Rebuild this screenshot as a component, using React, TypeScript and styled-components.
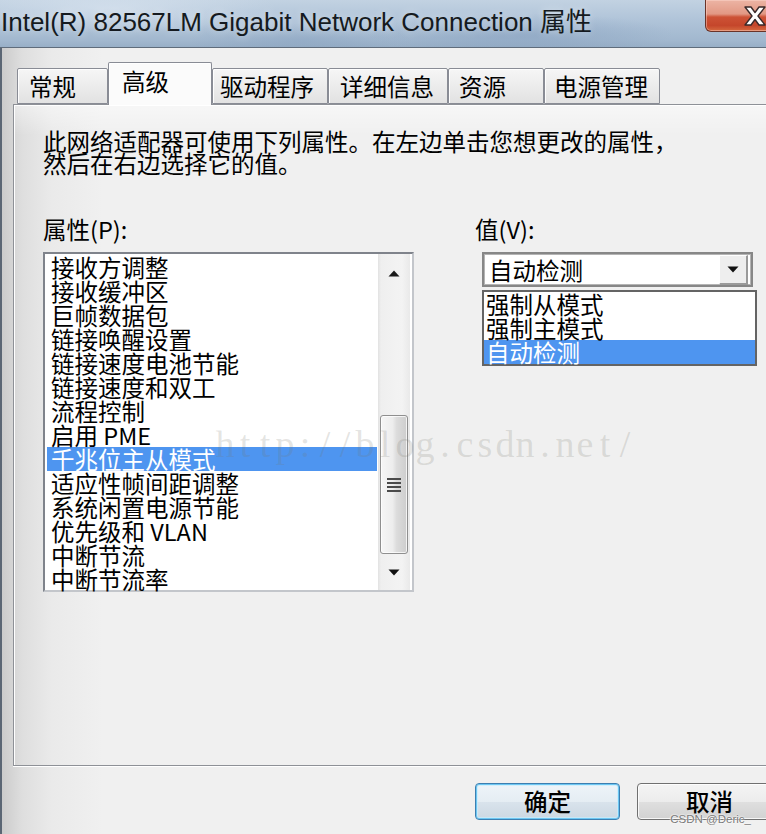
import React from "react";
import styled, { createGlobalStyle } from "styled-components";

const CJK = `"Noto Sans CJK SC", "Noto Sans CJK JP", "Noto Sans", sans-serif`;

const GlobalStyle = createGlobalStyle`
  html, body { margin: 0; padding: 0; background: #f0f0f0; }
  body { font-family: ${CJK}; }
  * { box-sizing: border-box; }
`;

const Window = styled.div`
  position: relative;
  width: 766px;
  height: 834px;
  overflow: hidden;
  display: flex;
  flex-direction: column;
  font-family: ${CJK};
  color: #000;
`;

const TitleBar = styled.div`
  height: 48px;
  flex: none;
  display: flex;
  justify-content: space-between;
  align-items: flex-start;
  border-bottom: 1px solid #5f6c7b;
  background:
    radial-gradient(ellipse 240px 36px at 110px 8px, rgba(226, 235, 245, 0.55), transparent 70%),
    radial-gradient(ellipse 220px 30px at 520px 34px, rgba(110, 140, 178, 0.35), transparent 70%),
    radial-gradient(ellipse 160px 24px at 300px 40px, rgba(120, 148, 182, 0.3), transparent 70%),
    linear-gradient(180deg, #c2d2e2 0%, #afc3d8 45%, #a2b8cf 85%, #98afc7 100%);
`;

const TitleText = styled.div`
  font-family: "Liberation Sans", ${CJK};
  font-size: 26px;
  line-height: 26px;
  padding: 9px 0 0 1px;
  color: #151a20;
  white-space: nowrap;
  text-shadow: 0 0 8px rgba(255, 255, 255, 0.55);
`;

const CloseButton = styled.div`
  width: 73px;
  height: 32px;
  margin-right: -12px;
  border: 1px solid #6a3328;
  border-top: none;
  border-radius: 0 0 0 6px;
  background: linear-gradient(180deg, #ecb4a4 0%, #e29884 45%, #cd5236 55%, #c5462b 82%, #d56a3f 100%);
  box-shadow: inset 0 0 0 1px rgba(255, 220, 210, 0.45);
  display: flex;
  align-items: center;
  padding-left: 37px;
`;

const Body = styled.div`
  flex: 1;
  display: flex;
  flex-direction: column;
  border-left: 2px solid #5b6674;
  padding: 14px 0 0 11px;
  background: linear-gradient(90deg, #cbcbcb 0px, #dedede 20px, #eaeaea 50px, #f0f0f0 100px);
`;

const TabStrip = styled.div`
  position: relative;
  z-index: 1;
  height: 43px;
  margin-bottom: -1px;
  padding-left: 4px;
  display: flex;
  align-items: flex-end;
`;

const Tab = styled.div<{ $active?: boolean; $w: number; $pl: number }>`
  width: ${(p) => p.$w}px;
  height: ${(p) => (p.$active ? 43 : 36)}px;
  margin-bottom: ${(p) => (p.$active ? 0 : 1)}px;
  padding: ${(p) => (p.$active ? 6 : 5)}px 0 0 ${(p) => p.$pl}px;
  font-size: 23.5px;
  line-height: 24px;
  white-space: nowrap;
  border: 1px solid #898c95;
  border-bottom: ${(p) => (p.$active ? "none" : "1px solid #898c95")};
  border-radius: 2px 2px 0 0;
  background: ${(p) =>
    p.$active ? "#fbfbfb" : "linear-gradient(180deg, #f6f6f6 0%, #ececec 50%, #e2e2e2 100%)"};
  box-shadow: inset 1px 1px 0 rgba(255, 255, 255, 0.9);
`;

const Panel = styled.div`
  position: relative;
  height: 662px;
  margin-right: -20px;
  border: 1px solid #8e9197;
  box-shadow: inset 1px 1px 0 #ffffff, 0 1px 0 #ffffff;
  padding: 25px 0 0 29px;
  background: linear-gradient(180deg, rgba(255, 255, 255, 0.45) 0px, rgba(255, 255, 255, 0) 30px);
`;

const Description = styled.p`
  margin: 0;
  font-size: 23.5px;
  line-height: 22px;
  white-space: nowrap;
`;

const Columns = styled.div`
  display: grid;
  grid-template-columns: 371px 282px;
  column-gap: 61px;
  margin-top: 43px;
`;

const Column = styled.div`
  display: flex;
  flex-direction: column;
`;

const FieldLabel = styled.div`
  font-size: 23.5px;
  line-height: 24px;
  white-space: nowrap;
`;

const ListBox = styled.div`
  width: 371px;
  height: 340px;
  margin-top: 11px;
  border: 2px solid;
  border-color: #7f838b #c3c6cb #c3c6cb #7f838b;
  background: #ffffff;
  display: flex;
`;

const Rows = styled.div`
  width: 330px;
  margin: 1px 1px 0 2px;
`;

const Row = styled.div<{ $selected?: boolean; $pl?: number }>`
  height: 24px;
  line-height: 24px;
  font-size: 23.5px;
  padding-left: ${(p) => p.$pl ?? 4}px;
  white-space: nowrap;
  background: ${(p) => (p.$selected ? "#4e95f0" : "transparent")};
  color: ${(p) => (p.$selected ? "#ffffff" : "#000000")};
`;

const ScrollTrack = styled.div`
  width: 32px;
  display: flex;
  flex-direction: column;
  background: linear-gradient(90deg, #e2e2e2 0, #efefef 3px, #f3f3f3 75%, #e9e9e9 100%);
`;

const ArrowBox = styled.div<{ $h: number }>`
  height: ${(p) => p.$h}px;
  flex: none;
  display: flex;
  align-items: center;
  justify-content: center;
`;

const Thumb = styled.div`
  width: 28px;
  height: 139px;
  margin: 123px 0 0 2px;
  border: 1px solid #8f8f8f;
  border-radius: 3px;
  background: linear-gradient(90deg, #f6f6f6 0%, #ededed 45%, #dcdcdc 60%, #cdcdcd 100%);
  box-shadow: inset 0 0 0 1px rgba(255, 255, 255, 0.75);
  display: flex;
  align-items: center;
  justify-content: center;
`;

const TrackFill = styled.div`
  flex: 1;
`;

const Combo = styled.div`
  width: 271px;
  height: 35px;
  margin: 11px 0 0 7px;
  border: 2px solid #878787;
  background: #ffffff;
  box-shadow: inset 0 0 0 1px #b4b4b4;
  display: flex;
  align-items: center;
  justify-content: space-between;
  padding: 0 3px 0 5px;
`;

const ComboText = styled.span`
  font-size: 23.5px;
  line-height: 24px;
`;

const DropButton = styled.div`
  width: 29px;
  height: 30px;
  border-style: solid;
  border-width: 1px 2px 2px 1px;
  border-color: #ffffff #9a9a9a #9a9a9a #ffffff;
  background: #eeeeee;
  display: flex;
  align-items: center;
  justify-content: center;
`;

const DropList = styled.div`
  width: 275px;
  height: 76px;
  margin: 3px 0 0 7px;
  border: 2px solid #646464;
  background: #ffffff;
`;

const Footer = styled.div`
  display: flex;
  justify-content: flex-end;
  gap: 17px;
  margin-right: -16px;
  padding-top: 17px;
`;

const DialogButton = styled.button<{ $default?: boolean }>`
  width: 145px;
  height: 37px;
  padding: 0;
  font-family: ${CJK};
  font-size: 23.5px;
  font-weight: 500;
  line-height: 1;
  color: #000;
  border-radius: 4px;
  border: 1px solid ${(p) => (p.$default ? "#3c7fb1" : "#707070")};
  background: ${(p) =>
    p.$default
      ? "linear-gradient(180deg, #eef4f9 0%, #e5edf3 50%, #d9e3ec 51%, #ccd8e2 100%)"
      : "linear-gradient(180deg, #f4f4f4 0%, #ececec 50%, #dfdfdf 51%, #d2d2d2 100%)"};
  box-shadow: ${(p) =>
    p.$default
      ? "inset 0 0 0 1px #6cc6f2, inset 0 0 0 2px rgba(200, 236, 252, 0.7)"
      : "inset 0 0 0 1px rgba(255, 255, 255, 0.8)"};
`;

const Watermark = styled.div`
  position: absolute;
  left: 215px;
  top: 424px;
  display: flex;
  pointer-events: none;
  font-family: "Liberation Serif", "DejaVu Serif", serif;
  font-size: 38px;
  line-height: 40px;
  color: rgba(120, 120, 110, 0.2);
  z-index: 3;
`;

const WatermarkChar = styled.span`
  width: 20px;
  text-align: center;
`;

const Credit = styled.div`
  position: absolute;
  right: 15px;
  bottom: 8px;
  font-family: "Liberation Sans", sans-serif;
  font-size: 11.5px;
  line-height: 14px;
  color: #7a7a7a;
  text-shadow: 0 0 2px #ffffff, 0 0 2px #ffffff;
  pointer-events: none;
  z-index: 3;
`;

const tabs = [
  { label: "常规", w: 91, pl: 11 },
  { label: "高级", w: 104, pl: 13, active: true },
  { label: "驱动程序", w: 116, pl: 7 },
  { label: "详细信息", w: 120, pl: 11 },
  { label: "资源", w: 96, pl: 10 },
  { label: "电源管理", w: 116, pl: 9 },
];

const properties = [
  "接收方调整",
  "接收缓冲区",
  "巨帧数据包",
  "链接唤醒设置",
  "链接速度电池节能",
  "链接速度和双工",
  "流程控制",
  "启用 PME",
  "千兆位主从模式",
  "适应性帧间距调整",
  "系统闲置电源节能",
  "优先级和 VLAN",
  "中断节流",
  "中断节流率",
];
const selectedProperty = 8;

const values = ["强制从模式", "强制主模式", "自动检测"];
const selectedValue = 2;

const CloseGlyph = () => (
  <svg width="24" height="22" viewBox="0 0 24 22">
    <polygon
      points="2,2 8,2 12,7.5 16,2 22,2 15,11 22,20 16,20 12,14.5 8,20 2,20 9,11"
      fill="#ffffff"
      stroke="#3a2a2a"
      strokeWidth="1.4"
      strokeLinejoin="round"
    />
  </svg>
);

const ArrowUp = () => (
  <svg width="12" height="7" viewBox="0 0 12 7">
    <polygon points="6,0.5 11.5,6.5 0.5,6.5" fill="#1b1b1b" />
  </svg>
);

const ArrowDown = ({ w = 12, h = 7 }: { w?: number; h?: number }) => (
  <svg width={w} height={h} viewBox="0 0 12 7">
    <polygon points="0.5,0.5 11.5,0.5 6,6.5" fill="#111111" />
  </svg>
);

const Grip = () => (
  <svg width="14" height="16" viewBox="0 0 14 16">
    {[1, 5, 9, 13].map((y) => (
      <rect key={y} x="0" y={y} width="14" height="2" fill="#4a4a4a" />
    ))}
  </svg>
);

export default function App() {
  return (
    <Window>
      <GlobalStyle />
      <TitleBar>
        <TitleText>Intel(R) 82567LM Gigabit Network Connection 属性</TitleText>
        <CloseButton>
          <CloseGlyph />
        </CloseButton>
      </TitleBar>
      <Body>
        <TabStrip>
          {tabs.map((t) => (
            <Tab key={t.label} $active={t.active} $w={t.w} $pl={t.pl}>
              {t.label}
            </Tab>
          ))}
        </TabStrip>
        <Panel>
          <Description>
            此网络适配器可使用下列属性。在左边单击您想更改的属性，
            <br />
            然后在右边选择它的值。
          </Description>
          <Columns>
            <Column>
              <FieldLabel>属性(P):</FieldLabel>
              <ListBox>
                <Rows>
                  {properties.map((p, i) => (
                    <Row key={p} $selected={i === selectedProperty}>
                      {p}
                    </Row>
                  ))}
                </Rows>
                <ScrollTrack>
                  <ArrowBox $h={38}>
                    <ArrowUp />
                  </ArrowBox>
                  <Thumb>
                    <Grip />
                  </Thumb>
                  <TrackFill />
                  <ArrowBox $h={36}>
                    <ArrowDown />
                  </ArrowBox>
                </ScrollTrack>
              </ListBox>
            </Column>
            <Column>
              <FieldLabel>值(V):</FieldLabel>
              <Combo>
                <ComboText>自动检测</ComboText>
                <DropButton>
                  <ArrowDown w={12} h={7} />
                </DropButton>
              </Combo>
              <DropList>
                {values.map((v, i) => (
                  <Row key={v} $pl={2} $selected={i === selectedValue}>
                    {v}
                  </Row>
                ))}
              </DropList>
            </Column>
          </Columns>
        </Panel>
        <Footer>
          <DialogButton $default>确定</DialogButton>
          <DialogButton>取消</DialogButton>
        </Footer>
      </Body>
      <Watermark>
        {"http://blog.csdn.net/".split("").map((c, i) => (
          <WatermarkChar key={i}>{c}</WatermarkChar>
        ))}
      </Watermark>
      <Credit>CSDN @Deric_</Credit>
    </Window>
  );
}
